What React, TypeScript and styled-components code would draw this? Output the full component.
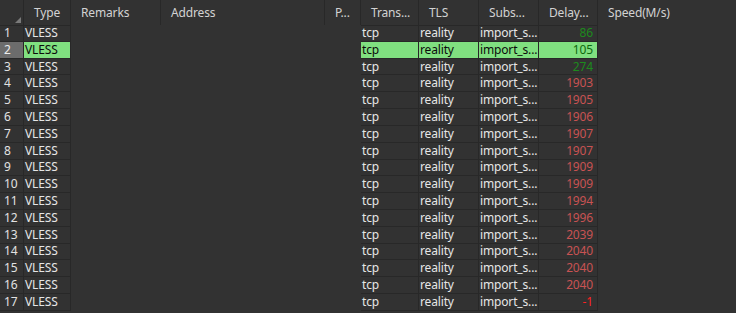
import React from "react";
import styled, { createGlobalStyle, css } from "styled-components";

const GlobalStyle = createGlobalStyle`
  html, body { margin: 0; padding: 0; background: #323232; }
  body { font-family: "Noto Sans", "Liberation Sans", sans-serif; }
`;

const COLS = "24px 47px 90px 164px 36px 58px 60px 60px 59px 1fr";
const LINE = "#282828";

const Grid = styled.div`
  width: 736px;
  height: 313px;
  overflow: hidden;
  background: #323232;
  font-size: 12px;
  letter-spacing: -0.15px;
  color: #e6e6e6;
`;

const HeaderRow = styled.div`
  display: grid;
  grid-template-columns: ${COLS};
  height: 25px;
`;

const HeaderCell = styled.div<{ $last?: boolean }>`
  position: relative;
  display: flex;
  align-items: center;
  padding-left: 10px;
  padding-bottom: 1px;
  color: #d2d2d2;
  white-space: nowrap;
  overflow: hidden;
  box-sizing: border-box;
  ${(p) => !p.$last && css`border-right: 1px solid ${LINE};`}
`;

const Corner = styled.div`
  position: relative;
  border-right: 1px solid ${LINE};
  &::after {
    content: "";
    position: absolute;
    right: 2px;
    bottom: 2px;
    width: 0;
    height: 0;
    border-left: 6px solid transparent;
    border-bottom: 6px solid #7a7a7a;
  }
`;

const Row = styled.div`
  display: grid;
  grid-template-columns: ${COLS};
  height: 16.82px;
`;

const RowHeader = styled.div<{ $sel?: boolean; $first?: boolean }>`
  box-sizing: border-box;
  border-right: 1px solid ${LINE};
  border-bottom: 1px solid ${LINE};
  ${(p) => p.$first && css`border-top: 1px solid ${LINE};`}
  padding-left: 4px;
  display: flex;
  align-items: center;
  line-height: 1;
  background: ${(p) => (p.$sel ? "#6c6c6c" : "transparent")};
  color: ${(p) => (p.$sel ? "#ececec" : "#e2e2e2")};
`;

const Cell = styled.div<{ $sel?: boolean; $first?: boolean; $right?: boolean; $color?: string }>`
  box-sizing: border-box;
  border-right: 1px solid ${LINE};
  border-bottom: 1px solid ${LINE};
  ${(p) => p.$first && css`border-top: 1px solid ${LINE};`}
  display: flex;
  align-items: center;
  justify-content: ${(p) => (p.$right ? "flex-end" : "flex-start")};
  padding: ${(p) => (p.$right ? "0 4px 0 0" : "0 0 0 1px")};
  white-space: nowrap;
  overflow: hidden;
  line-height: 1;
  background: ${(p) => (p.$sel ? "#80e080" : "transparent")};
  color: ${(p) => p.$color ?? (p.$sel ? "#0c0c0c" : "#e6e6e6")};
`;

const Empty = styled.div``;

const delays = [86, 105, 274, 1903, 1905, 1906, 1907, 1907, 1909, 1909, 1994, 1996, 2039, 2040, 2040, 2040, -1];

function delayColor(d: number, sel: boolean) {
  if (d < 0) return "#ff2222";
  if (d < 1000) return sel ? "#0e6a0e" : "#1d8a1d";
  return "#c85252";
}

const headers = ["Type", "Remarks", "Address", "P...", "Trans...", "TLS", "Subs...", "Delay...", "Speed(M/s)"];

export default function App() {
  return (
    <>
      <GlobalStyle />
      <Grid>
        <HeaderRow>
          <Corner />
          {headers.map((h, i) => (
            <HeaderCell key={h} $last={i === headers.length - 1}>
              {h}
            </HeaderCell>
          ))}
        </HeaderRow>
        {delays.map((d, i) => {
          const sel = i === 1;
          const first = i === 0;
          return (
            <Row key={i}>
              <RowHeader $sel={sel} $first={first}>{i + 1}</RowHeader>
              <Cell $sel={sel} $first={first}>VLESS</Cell>
              <Empty />
              <Empty />
              <Empty />
              <Cell $sel={sel} $first={first}>tcp</Cell>
              <Cell $sel={sel} $first={first}>reality</Cell>
              <Cell $sel={sel} $first={first}>import_s...</Cell>
              <Cell $sel={sel} $first={first} $right $color={delayColor(d, sel)}>
                {d}
              </Cell>
              <Empty />
            </Row>
          );
        })}
      </Grid>
    </>
  );
}
